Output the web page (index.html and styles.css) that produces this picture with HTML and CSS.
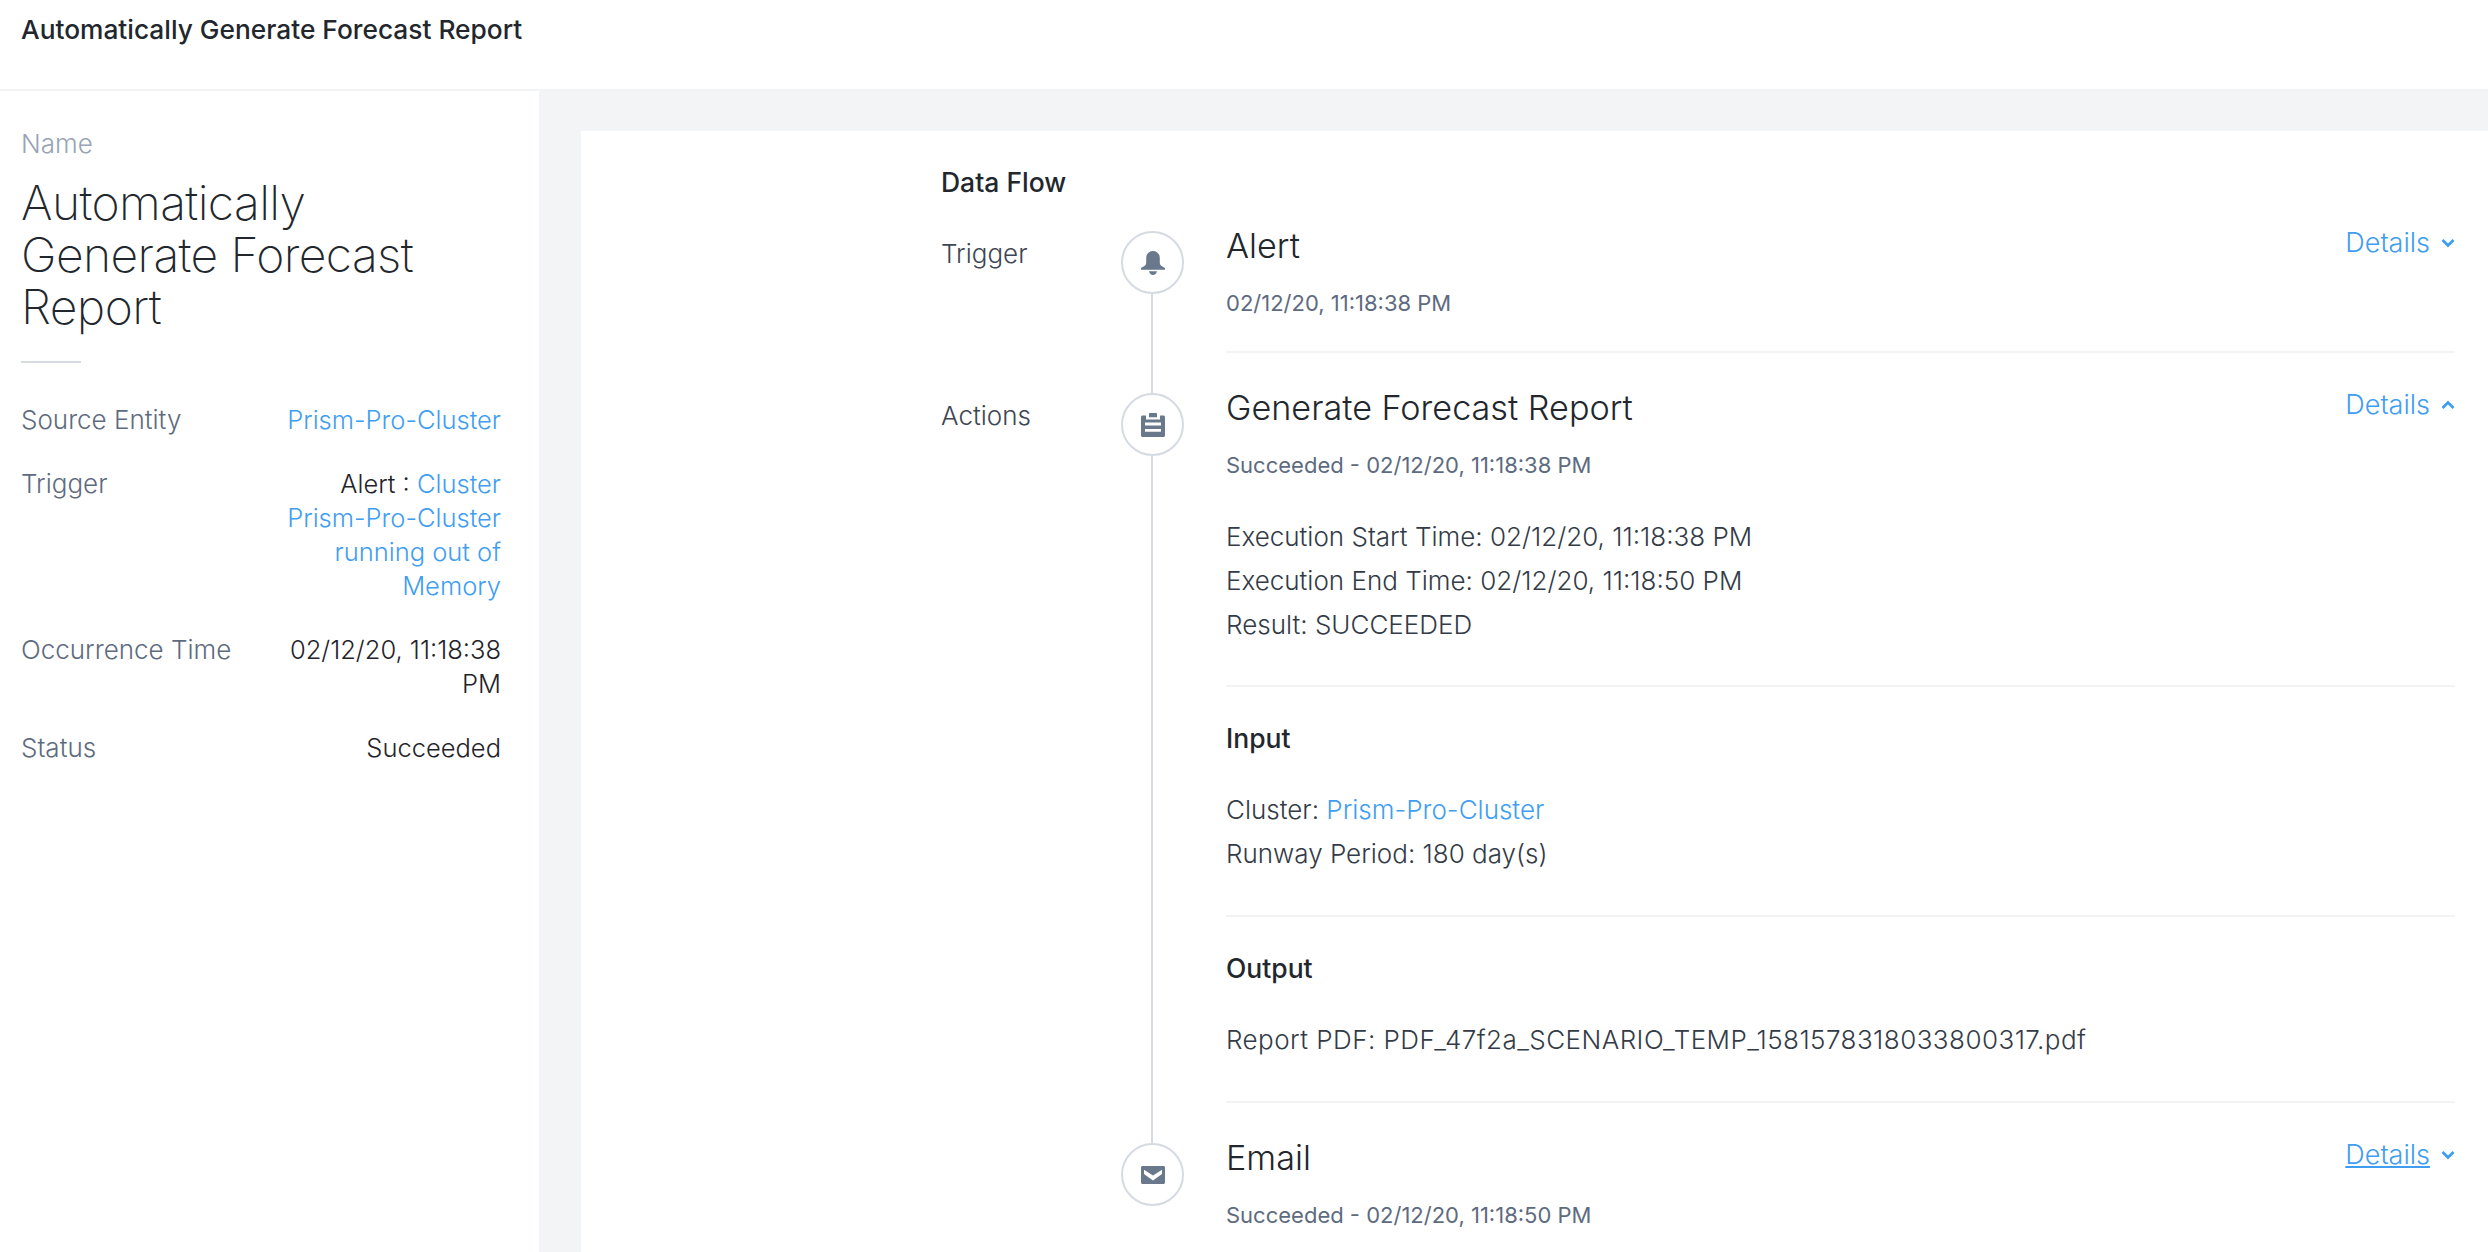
FILE: index.html
```html
<!DOCTYPE html>
<html lang="en">
<head>
<meta charset="utf-8">
<title>Automatically Generate Forecast Report</title>
<link rel="stylesheet" href="styles.css">
</head>
<body>
<header class="topbar">Automatically Generate Forecast Report</header>
<div class="layout">
  <aside class="sidebar">
    <div class="name-label">Name</div>
    <h1 class="name-value">Automatically Generate Forecast Report</h1>
    <div class="short-rule"></div>
    <dl class="facts">
      <div class="fact"><dt>Source Entity</dt><dd><a class="link">Prism-Pro-Cluster</a></dd></div>
      <div class="fact"><dt>Trigger</dt><dd>Alert : <a class="link">Cluster Prism-Pro-Cluster running out of Memory</a></dd></div>
      <div class="fact"><dt>Occurrence Time</dt><dd>02/12/20, 11:18:38 PM</dd></div>
      <div class="fact"><dt>Status</dt><dd>Succeeded</dd></div>
    </dl>
  </aside>
  <main class="gutter">
    <section class="panel">
      <h2 class="flow-title">Data Flow</h2>

      <div class="flow-row">
        <div class="flow-label">Trigger</div>
        <div class="node">
          <div class="circle">
            <svg class="icon" viewBox="0 0 24 24"><path d="M12 0C8 0 5.200 3 5.200 7v5c0 2-2 3.500-5.200 5v1.800h24V17c-3.200-1.500-5.200-3-5.200-5V7C18.800 3 16 0 12 0z"/><path d="M8 20.300h8c-.5 2.200-2 3.700-4 3.700s-3.500-1.500-4-3.700z"/></svg>
          </div>
          <div class="stem"></div>
        </div>
        <div class="flow-body flow-body-first">
          <div class="step-head">
            <h3 class="step-title">Alert</h3>
            <div class="details"><a class="details-link">Details</a><svg class="chev" viewBox="0 0 14 10"><path d="M1.500 2l5.500 5.500L12.500 2"/></svg></div>
          </div>
          <div class="step-sub">02/12/20, 11:18:38 PM</div>
        </div>
      </div>

      <div class="flow-row">
        <div class="flow-label">Actions</div>
        <div class="node">
          <div class="circle">
            <svg class="icon" viewBox="0 0 24 24"><path d="M1.500 2.500h3.500v4h14v-4h3.500c.8 0 1.500.7 1.500 1.500v18.500c0 .8-.7 1.500-1.500 1.500h-21C.7 24 0 23.300 0 22.500V4c0-.8.7-1.500 1.500-1.500zM4 9.500v3h16v-3H4zm0 6.500v2.800h16V16H4z" fill-rule="evenodd"/><rect x="8" y="0" width="8" height="4.300" rx=".6"/></svg>
          </div>
          <div class="stem"></div>
        </div>
        <div class="flow-body">
          <div class="step-head">
            <h3 class="step-title">Generate Forecast Report</h3>
            <div class="details"><a class="details-link">Details</a><svg class="chev" viewBox="0 0 14 10"><path d="M1.500 8L7 2.500 12.500 8"/></svg></div>
          </div>
          <div class="step-sub">Succeeded - 02/12/20, 11:18:38 PM</div>
          <div class="block">
            <div class="line">Execution Start Time: 02/12/20, 11:18:38 PM</div>
            <div class="line">Execution End Time: 02/12/20, 11:18:50 PM</div>
            <div class="line">Result: SUCCEEDED</div>
          </div>
          <div class="sub-section">
            <h4 class="sub-title">Input</h4>
            <div class="line">Cluster: <a class="link">Prism-Pro-Cluster</a></div>
            <div class="line">Runway Period: 180 day(s)</div>
          </div>
          <div class="sub-section">
            <h4 class="sub-title">Output</h4>
            <div class="line line-file">Report PDF: PDF_47f2a_SCENARIO_TEMP_1581578318033800317.pdf</div>
          </div>
        </div>
      </div>

      <div class="flow-row">
        <div class="flow-label"></div>
        <div class="node">
          <div class="circle">
            <svg class="icon icon-mail" viewBox="0 0 24 18"><path fill-rule="evenodd" d="M1.500 0h21c.8 0 1.500.7 1.500 1.500v15c0 .8-.7 1.500-1.500 1.500h-21C.7 18 0 17.300 0 16.500v-15C0 .7.700 0 1.500 0zM3 3.800l9 5.700 9-5.700V8l-9 6.500L3 8V3.800z"/></svg>
          </div>
        </div>
        <div class="flow-body flow-body-end">
          <div class="step-head">
            <h3 class="step-title">Email</h3>
            <div class="details"><a class="details-link details-hover">Details</a><svg class="chev" viewBox="0 0 14 10"><path d="M1.500 2l5.500 5.500L12.500 2"/></svg></div>
          </div>
          <div class="step-sub">Succeeded - 02/12/20, 11:18:50 PM</div>
        </div>
      </div>
    </section>
  </main>
</div>
</body>
</html>
```

FILE: styles.css
```css
* { box-sizing: border-box; }
html, body { margin: 0; height: 100%; overflow: hidden; }
body {
  background: #fff;
  color: #22272e;
  font-family: "Inter", "Liberation Sans", sans-serif;
  font-size: 26px;
  font-weight: 300;
  width: 2488px;
  height: 1252px;
}
h1, h2, h3, h4, dl, dd { margin: 0; font-weight: 300; }

.topbar {
  height: 91px;
  padding: 15px 21px 0;
  line-height: 30px;
  font-size: 26.300px;
  font-weight: 500;
  border-bottom: 2px solid #f2f3f5;
}

.layout { display: flex; height: 1161px; }

.sidebar { width: 539px; flex: none; padding: 38px 38px 0 21px; }
.name-label { color: #98a4b6; line-height: 30px; }
.name-value { margin-top: 18px; font-size: 48px; line-height: 52px; font-weight: 200; letter-spacing: -0.6px; width: 440px; }
.short-rule { width: 60px; height: 2px; background: #d5dae3; margin-top: 28px; }
.facts { margin-top: 40px; display: flex; flex-direction: column; gap: 30px; font-size: 25.500px; }
.fact { display: flex; justify-content: space-between; gap: 16px; line-height: 34px; }
.fact dt { color: #5e6b7f; white-space: nowrap; font-size: 26px; }
.fact dd { width: 225px; flex: none; text-align: right; color: #1f242b; }

.link { color: #3f9ef2; }

.gutter { flex: 1; background: #f2f4f6; padding: 40px 0 0 42px; min-width: 0; }
.panel { background: #fff; height: 100%; padding: 36px 33px 0 360px; }
.flow-title { font-size: 26.500px; font-weight: 500; line-height: 30px; margin-bottom: 34px; }

.flow-row { display: grid; grid-template-columns: 180px 63px 1fr; }
.flow-label { padding-top: 8px; line-height: 30px; color: #3d4653; }
.node { display: flex; flex-direction: column; align-items: center; }
.circle {
  width: 63px; height: 63px; flex: none;
  border: 2px solid #d5dae3; border-radius: 50%;
  display: flex; align-items: center; justify-content: center;
}
.icon { width: 24px; height: 24px; fill: #6a788c; display: block; }
.icon-mail { height: 18px; }
.stem { flex: 1; width: 2px; background: #d5dae3; margin-right: 2px; }

.flow-body { margin-left: 42px; padding-bottom: 39px; border-bottom: 2px solid #f2f3f5; margin-bottom: 40px; min-width: 0; }
.flow-body-first { padding-bottom: 33px; }
.flow-body-end { border-bottom: 0; margin-bottom: 0; padding-bottom: 0; }

.step-head { display: flex; justify-content: space-between; align-items: flex-start; height: 30px; }
.step-title { font-size: 34.200px; line-height: 30px; font-weight: 300; }
.step-sub { margin-top: 27px; line-height: 30px; font-size: 22px; color: #5e6b7f; font-weight: 400; }

.details { display: flex; align-items: center; font-size: 27px; line-height: 22px; padding-top: 1px; color: #3f9ef2; }
.details-hover { text-decoration: underline; }
.chev { width: 14px; height: 10px; margin-left: 11px; fill: none; stroke: #3f9ef2; stroke-width: 2.800; }

.block { margin-top: 35px; }
.line { line-height: 44px; color: #333b47; }
.line-file { letter-spacing: 0.450px; }
.sub-section { margin-top: 39px; padding-top: 36px; border-top: 2px solid #f2f3f5; }
.block + .sub-section { margin-top: 38px; }
.sub-title { font-size: 26.500px; font-weight: 500; line-height: 30px; margin-bottom: 35px; }
```
